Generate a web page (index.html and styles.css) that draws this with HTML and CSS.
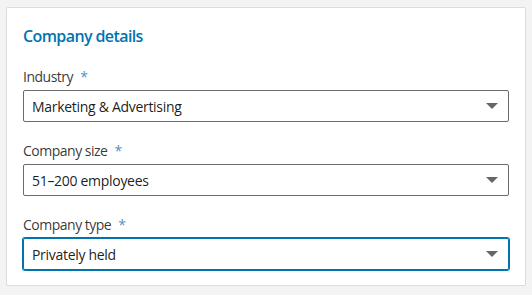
FILE: index.html
```html
<!DOCTYPE html>
<html lang="en">
<head>
<meta charset="utf-8">
<title>Company details</title>
<link rel="stylesheet" href="styles.css">
</head>
<body>
<section class="card">
  <h2 class="card-title">Company details</h2>
  <div class="field">
    <label class="field-label">Industry <span class="req">*</span></label>
    <div class="select">
      <span class="select-value">Marketing &amp; Advertising</span>
      <svg class="caret" width="12" height="6" viewBox="0 0 12 6"><path d="M0 0h12L6 6z" fill="#666"/></svg>
    </div>
  </div>
  <div class="field">
    <label class="field-label">Company size <span class="req">*</span></label>
    <div class="select">
      <span class="select-value">51–200 employees</span>
      <svg class="caret" width="12" height="6" viewBox="0 0 12 6"><path d="M0 0h12L6 6z" fill="#666"/></svg>
    </div>
  </div>
  <div class="field">
    <label class="field-label">Company type <span class="req">*</span></label>
    <div class="select select-focused">
      <span class="select-value">Privately held</span>
      <svg class="caret" width="12" height="6" viewBox="0 0 12 6"><path d="M0 0h12L6 6z" fill="#666"/></svg>
    </div>
  </div>
</section>
</body>
</html>
```
FILE: styles.css
```css
html, body {
  margin: 0;
  padding: 0;
  background: #f3f3f3;
}
body {
  padding: 7px 6px 0 6px;
  font-family: "Open Sans", "Noto Sans", sans-serif;
}
.card {
  width: 520px;
  box-sizing: border-box;
  background: #fff;
  border: 1px solid #dcdcdc;
  border-radius: 2px;
  padding: 16px 16px 15px 16px;
}
.card-title {
  margin: 0;
  font-size: 16px;
  line-height: 24px;
  font-weight: 600;
  color: #0073b1;
  letter-spacing: -0.6px;
}
.field {
  margin-top: 19px;
}
.field-label {
  display: block;
  font-size: 14px;
  line-height: 20px;
  color: rgba(0, 0, 0, 0.8);
  margin-bottom: 3px;
  letter-spacing: -0.5px;
}
.req {
  color: #5b8fc7;
  margin-left: 4px;
}
.select {
  box-sizing: border-box;
  height: 32px;
  border: 1px solid #6b6b6b;
  border-radius: 2px;
  padding: 6px 10px 4px 8px;
  display: flex;
  align-items: flex-start;
  justify-content: space-between;
}
.select-value {
  font-size: 14px;
  line-height: 20px;
  color: rgba(0, 0, 0, 0.9);
  letter-spacing: -0.3px;
}
.caret {
  margin-top: 6px;
}
.select-focused {
  border-color: #0073b1;
  box-shadow: 0 0 0 1px #0073b1;
}
```
